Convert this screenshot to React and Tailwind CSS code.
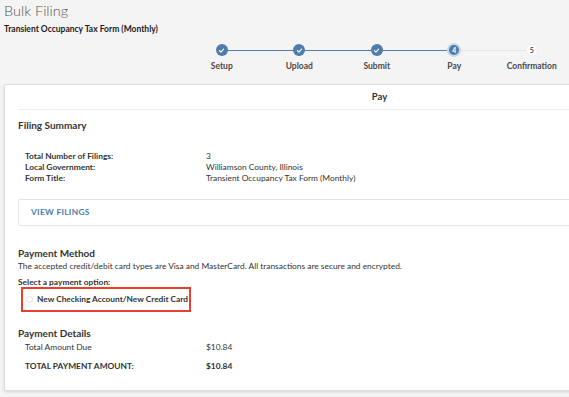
import React from 'react';

const steps = [
    { label: 'Setup', state: 'done' },
    { label: 'Upload', state: 'done' },
    { label: 'Submit', state: 'done' },
    { label: 'Pay', state: 'current', n: 4 },
    { label: 'Confirmation', state: 'todo', n: 5 },
];

const Check = () => (
    <svg width="7" height="7" viewBox="0 0 10 10" fill="none">
        <path d="M2 5.2 L4.2 7.2 L8 3" stroke="white" strokeWidth="1.6" strokeLinecap="round" strokeLinejoin="round" />
    </svg>
);

const Stepper = () => (
    <div className="flex ml-[183px] mt-[8px]">
        {steps.map((s, i) => {
            const leftBlue = i > 0 && i <= 3;
            const rightBlue = i < 3;
            return (
                <div key={s.label} className="w-[77.5px] shrink-0 flex flex-col items-center">
                    <div className="flex items-center w-full h-[14px]">
                        <div className={`flex-1 h-px ${i === 0 ? 'bg-transparent' : leftBlue ? 'bg-[#4f7cac]' : 'bg-[#e3e6ea]'}`} />
                        {s.state === 'done' && (
                            <div className="w-[12px] h-[12px] rounded-full bg-[#4f7cac] flex items-center justify-center">
                                <Check />
                            </div>
                        )}
                        {s.state === 'current' && (
                            <div className="w-[14px] h-[14px] rounded-full bg-[#4f7cac] border-2 border-[#c9d7e7] flex items-center justify-center text-white text-[7px] font-bold leading-none">
                                {s.n}
                            </div>
                        )}
                        {s.state === 'todo' && (
                            <div className="w-[12px] h-[12px] rounded-full bg-white border border-[#eceef0] flex items-center justify-center text-[#333] text-[7px] font-semibold leading-none">
                                {s.n}
                            </div>
                        )}
                        <div className={`flex-1 h-px ${i === 4 ? 'bg-transparent' : rightBlue ? 'bg-[#4f7cac]' : 'bg-[#e3e6ea]'}`} />
                    </div>
                    <div className="mt-[3px] text-[8.5px] font-bold text-[#4a4a4a] leading-[12px]">{s.label}</div>
                </div>
            );
        })}
    </div>
);

const Row = ({ label, value, bold }) => (
    <div className="flex text-[8.4px] leading-[11px] text-[#333]">
        <div className={`w-[181px] ${bold ? 'font-bold' : ''}`}>{label}</div>
        <div>{value}</div>
    </div>
);

export default function App() {
    return (
        <div className="w-[569px] h-[397px] overflow-hidden bg-[#f4f4f4] font-['Lato',sans-serif]">
            <div className="px-[4px] pt-[1px]">
                <h1 className="text-[14.5px] leading-[20px] text-[#555] font-light">Bulk Filing</h1>
                <div className="mt-[2px] text-[8.5px] leading-[12px] font-bold text-[#222]">Transient Occupancy Tax Form (Monthly)</div>
            </div>

            <Stepper />

            <div className="ml-[4px] mt-[12px] w-[748px] h-[307px] bg-white border border-[#dcdcdc] rounded-[2px] shadow-[0_1px_3px_rgba(0,0,0,0.12)]">
                <div className="ml-[13px] pr-[10px] h-[25px] border-b border-[#eeeeee] flex items-center justify-center pt-[1px]">
                    <span className="text-[9.5px] font-bold text-[#333]">Pay</span>
                </div>

                <div className="px-[13px]">
                    <h2 className="mt-[9px] text-[10px] leading-[12px] font-bold text-[#333]">Filing Summary</h2>

                    <div className="mt-[20px] ml-[7px]">
                        <Row label={<span className="font-bold">Total Number of Filings:</span>} value="3" />
                        <Row label={<span className="font-bold">Local Government:</span>} value="Williamson County, Illinois" />
                        <Row label={<span className="font-bold">Form Title:</span>} value="Transient Occupancy Tax Form (Monthly)" />
                    </div>

                    <div className="mt-[15px] h-[27px] border border-[#e6e6e6] rounded-[2px] flex items-center pl-[12px]">
                        <span className="text-[8.4px] font-bold text-[#4f7cac] tracking-[0.3px]">VIEW FILINGS</span>
                    </div>

                    <h2 className="mt-[21px] text-[10px] leading-[12px] font-bold text-[#333]">Payment Method</h2>
                    <p className="mt-[2px] text-[8.4px] leading-[11px] text-[#333] whitespace-nowrap">
                        The accepted credit/debit card types are Visa and MasterCard. All transactions are secure and encrypted.
                    </p>
                    <div className="mt-[5px] text-[8.4px] leading-[11px] font-bold text-[#333]">Select a payment option:</div>

                    <div className="mt-[-1px] ml-[3px] w-[170px] h-[25px] border-2 border-[#e8412f] flex items-center pl-[3px]">
                        <span className="w-[7px] h-[7px] rounded-full border border-[#e0e0e0] bg-white shrink-0" />
                        <span className="ml-[4px] text-[8.3px] font-bold text-[#333] whitespace-nowrap">New Checking Account/New Credit Card</span>
                    </div>

                    <h2 className="mt-[15px] text-[10px] leading-[12px] font-bold text-[#333]">Payment Details</h2>
                    <div className="ml-[7px] mt-[3px]">
                        <Row label="Total Amount Due" value="$10.84" />
                        <div className="mt-[8px]">
                            <Row label="TOTAL PAYMENT AMOUNT:" value={<span className="font-bold">$10.84</span>} bold />
                        </div>
                    </div>
                </div>
            </div>
        </div>
    );
}
